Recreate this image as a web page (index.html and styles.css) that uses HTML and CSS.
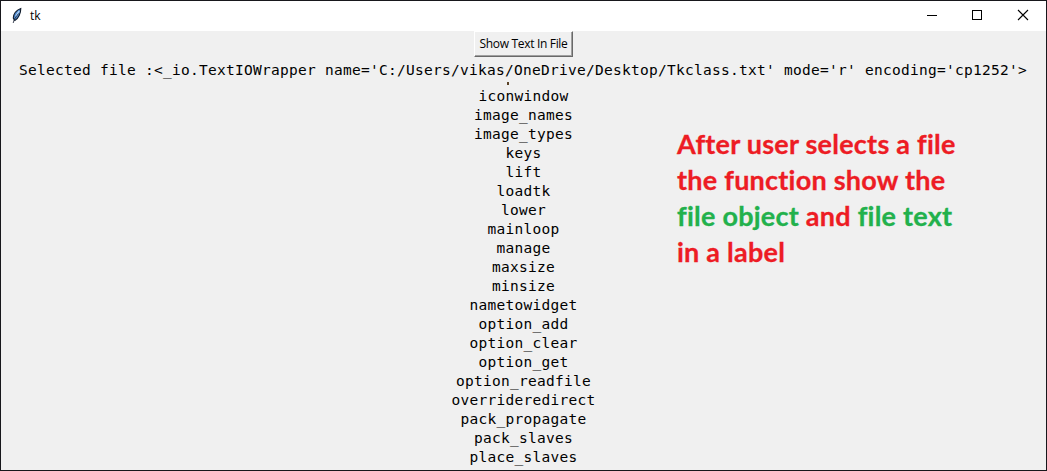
FILE: index.html
```html
<!DOCTYPE html>
<html lang="en">
<head>
<meta charset="utf-8">
<title>tk</title>
<link rel="stylesheet" href="styles.css">
</head>
<body>
<div class="window">
  <header class="titlebar">
    <svg class="feather" width="12" height="18" viewBox="0 0 12 18">
      <path d="M9.8 1.5 C6 3 2.6 6 2.3 11 L3.8 13.5 C7.5 11.5 9.8 6 9.8 1.5Z" fill="#4b87cf" stroke="#111c2b" stroke-width="1.1"/>
      <path d="M8.2 4 L4.8 9.5" stroke="#a9cdf3" stroke-width="1.5"/>
      <path d="M7.5 6.5 L3.2 12.5 L2.2 16" fill="none" stroke="#182234" stroke-width=".8"/>
    </svg>
    <span class="title">tk</span>
    <div class="controls">
      <svg class="control" width="46" height="30" viewBox="0 0 46 30"><path d="M18 14.5H28" stroke="#000"/></svg>
      <svg class="control" width="46" height="30" viewBox="0 0 46 30"><rect x="17.5" y="9.5" width="9" height="9" fill="none" stroke="#000"/></svg>
      <svg class="control" width="46" height="30" viewBox="0 0 46 30"><path d="M17 9L27 19M27 9L17 19" stroke="#000" stroke-width="1.1"/></svg>
    </div>
  </header>
  <main class="content">
    <button class="show">Show Text In File</button>
    <div class="selected">Selected file :&lt;_io.TextIOWrapper name='C:/Users/vikas/OneDrive/Desktop/Tkclass.txt' mode='r' encoding='cp1252'&gt;</div>
    <div class="sliver"></div>
    <div class="text">iconwindow
image_names
image_types
keys
lift
loadtk
lower
mainloop
manage
maxsize
minsize
nametowidget
option_add
option_clear
option_get
option_readfile
overrideredirect
pack_propagate
pack_slaves
place_slaves</div>
    <div class="note">
      <div>After user selects a file</div>
      <div>the function show the</div>
      <div><span class="green">file object</span> and <span class="green">file text</span></div>
      <div>in a label</div>
    </div>
  </main>
  <svg class="edge" width="110" height="230" viewBox="0 0 110 230">
    <path d="M2 .5H5M8 .5H11M18 .5H25M30 .5H38M44 .5H47M55 .5H58M62 .5H65M69 .5H71M75 .5H77M89 .5H92M99 .5H101" stroke="#12777a"/>
    <path d="M.5 2V4M.5 18V31M.5 101V103M.5 125V127M.5 186V199M.5 210V223" stroke="#12777a"/>
  </svg>
</div>
</body>
</html>
```
FILE: styles.css
```css
* { box-sizing: border-box; }
body { margin: 0; background: #f0f0f0; }
.window {
  position: relative;
  width: 1047px;
  height: 471px;
  overflow: hidden;
  border: 1px solid #17171b;
  background: #f0f0f0;
}
.titlebar {
  display: flex;
  align-items: center;
  height: 30px;
  padding-left: 10px;
  background: #fff;
}
.title {
  margin-left: 7px;
  font: 12px/16px "Open Sans", sans-serif;
  color: #000;
}
.controls { display: flex; margin-left: auto; margin-right: -1px; }
.control { display: block; }
.content {
  display: flex;
  flex-direction: column;
  align-items: center;
  color: #000;
}
.show {
  width: 99px;
  height: 26px;
  padding: 0;
  border: 1px solid;
  border-color: #fff #696969 #696969 #fff;
  box-shadow: inset -1px -1px #a0a0a0;
  background: #f0f0f0;
  font: 12px/20px "Open Sans", sans-serif;
  letter-spacing: -0.32px;
  white-space: nowrap;
  color: #000;
}
.selected, .text {
  margin-right: 1px;
  font: 14.5px/19px "DejaVu Sans Mono", monospace;
  letter-spacing: 0.27px;
  text-align: center;
  white-space: pre;
}
.text { margin-right: 0; }
.selected { margin-top: 4px; }
.sliver {
  width: 2px;
  height: 3px;
  margin: 2px 32px 2px 0;
  background: #5a4328;
}
.note {
  position: absolute;
  left: 676px;
  top: 125px;
  font: bold 27px/36px Lato, sans-serif;
  font-variant-ligatures: none;
  letter-spacing: 0.24px;
  -webkit-text-stroke: 0.3px;
  white-space: nowrap;
  color: #ed1c24;
}
.green { color: #22b14c; }
.edge {
  position: absolute;
  left: -1px;
  top: -1px;
}
```
